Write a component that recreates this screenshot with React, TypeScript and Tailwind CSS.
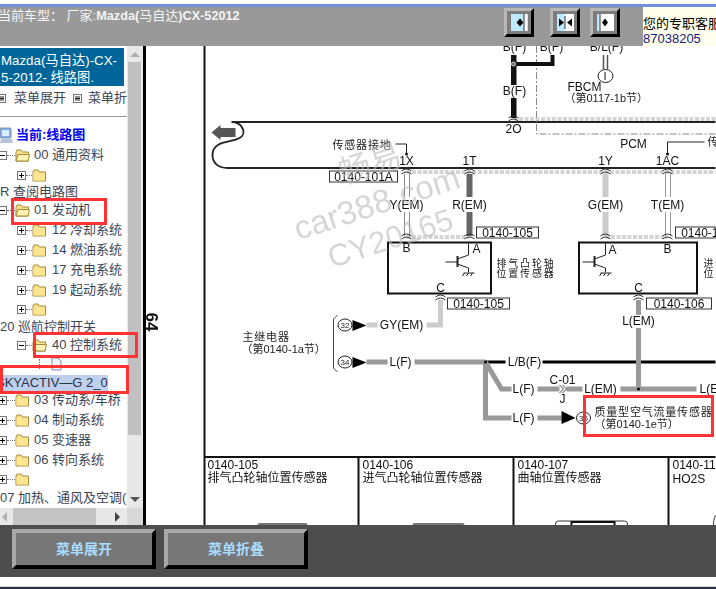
const tree = [
  { h: 'h-[20px]', kind: 'root', label: '当前:线路图' },
  { h: 'h-[20px]', kind: 'folder', level: 0, open: true, label: '00 通用资料' },
  { h: 'h-[20px]', kind: 'folder', level: 1, label: '' },
  { h: 'h-[14px]', kind: 'text', label: 'R 查阅电路图' },
  { h: 'h-[22px]', kind: 'folder', level: 0, open: true, label: '01 发动机' },
  { h: 'h-[18px]', kind: 'folder', level: 1, label: '12 冷却系统' },
  { h: 'h-[22px]', kind: 'folder', level: 1, label: '14 燃油系统' },
  { h: 'h-[18px]', kind: 'folder', level: 1, label: '17 充电系统' },
  { h: 'h-[22px]', kind: 'folder', level: 1, label: '19 起动系统' },
  { h: 'h-[16px]', kind: 'folder', level: 1, label: '' },
  { h: 'h-[20px]', kind: 'text', label: '20 巡航控制开关' },
  { h: 'h-[16px]', kind: 'folder', level: 1, open: true, label: '40 控制系统' },
  { h: 'h-[22px]', kind: 'doc', label: '' },
  { h: 'h-[16px]', kind: 'selected', label: 'SKYACTIV—G 2_0' },
  { h: 'h-[18px]', kind: 'folder', level: 0, label: '03 传动系/车桥' },
  { h: 'h-[22px]', kind: 'folder', level: 0, label: '04 制动系统' },
  { h: 'h-[18px]', kind: 'folder', level: 0, label: '05 变速器' },
  { h: 'h-[22px]', kind: 'folder', level: 0, label: '06 转向系统' },
  { h: 'h-[16px]', kind: 'folder', level: 0, label: '' },
  { h: 'h-[22px]', kind: 'text', label: '07 加热、通风及空调(' },
]

function Folder({ open }: { open?: boolean }) {
  return (
    <svg width="15" height="13" viewBox="0 0 15 13" className="shrink-0">
      <path d="M1 3 L2 1 H6 L7.5 3 H13.5 V12 H1 Z" fill="#fbe38a" stroke="#a58a3c" />
      {open ? (
        <path d="M1 12 L3 5.5 H14.5 L13 12 Z" fill="#fff2b5" stroke="#a58a3c" />
      ) : (
        <path d="M1.5 4 H13 V11.5 H1.5 Z" fill="#fde68f" />
      )}
    </svg>
  )
}

function Expander({ open }: { open?: boolean }) {
  return (
    <span className="relative flex h-[9px] w-[9px] shrink-0 items-center justify-center border border-[#777] bg-white">
      <span className="h-px w-[5px] bg-black" />
      {!open && <span className="absolute h-[5px] w-px bg-black" />}
    </span>
  )
}

function TreeRow({ row }: { row: (typeof tree)[number] }) {
  if (row.kind === 'root') {
    return (
      <div className={`${row.h} flex items-center`}>
        <svg width="15" height="17" viewBox="0 0 15 17" className="-ml-[1px] shrink-0">
          <rect x="1" y="1" width="11" height="10" rx="1" fill="#7fb0ee" stroke="#8090b0" />
          <rect x="3" y="3" width="7" height="6" fill="#d8ecff" />
          <path d="M2 12 H13 L14 16 H1 Z" fill="#b8c4d8" />
        </svg>
        <span className="ml-[2px] text-[13px] font-bold text-[#0000ee] whitespace-nowrap">{row.label}</span>
      </div>
    )
  }
  if (row.kind === 'text') {
    return (
      <div className={`${row.h} flex items-center text-[13px] text-[#3c4656] whitespace-nowrap`}>{row.label}</div>
    )
  }
  if (row.kind === 'selected') {
    return (
      <div className={`${row.h} flex items-center whitespace-nowrap`}>
        <span className="-ml-[4px] bg-[#c0d0ec] text-[13px] leading-[16px] text-[#26344c]">{row.label}</span>
      </div>
    )
  }
  if (row.kind === 'doc') {
    return (
      <div className={`${row.h} flex items-center pl-[39px]`}>
        <span className="mr-[11px] h-[10px] border-l border-dotted border-[#777]" />
        <svg width="11" height="14" viewBox="0 0 11 14">
          <path d="M1 1 H7 L10 4 V13 H1 Z" fill="#f2f4fc" stroke="#8088b8" />
        </svg>
      </div>
    )
  }
  const inner = row.level === 1
  return (
    <div className={`${row.h} flex items-center whitespace-nowrap ${inner ? 'pl-[17px]' : '-ml-[2px]'}`}>
      <Expander open={row.open} />
      <span className={`border-t border-dotted border-[#777] ${inner ? 'w-[6px]' : 'w-[8px]'}`} />
      <Folder open={row.open} />
      <span className={`text-[13px] text-[#3c4656] ${inner ? 'ml-[5px]' : 'ml-[4px]'}`}>{row.label}</span>
    </div>
  )
}

function MenuGlyph() {
  return (
    <svg width="9" height="9" viewBox="0 0 9 9" className="shrink-0">
      <rect x="0.5" y="0.5" width="8" height="8" fill="#fff" stroke="#777" />
      <path d="M2 3 H7 M2 4.5 H7 M2 6 H7" stroke="#222" />
    </svg>
  )
}

function Sidebar() {
  return (
    <aside className="flex w-[146px] shrink-0 flex-col border-r-[3px] border-black bg-[#d8d8d8]">
      <div className="flex min-h-0 flex-1">
        <div className="w-[127px] shrink-0 overflow-hidden bg-white pt-[2px]">
          <div className="h-[38px] w-[124px] bg-[#006699] pl-[1px] pt-[4px] text-[13.3px] leading-[17px] whitespace-nowrap text-white">
            <div>Mazda(马自达)-CX-</div>
            <div>5-2012- 线路图.</div>
          </div>
          <div className="flex h-[24px] items-center text-[13px] whitespace-nowrap text-[#3c4656]">
            <span className="-ml-[3px]"><MenuGlyph /></span>
            <span className="ml-[8px]">菜单展开</span>
            <span className="ml-[7px]"><MenuGlyph /></span>
            <span className="ml-[6px]">菜单折</span>
          </div>
          <div className="mt-[6px] h-px bg-[#999]" />
          <div className="pt-[8px]">
            {tree.map((row, i) => (
              <TreeRow key={i} row={row} />
            ))}
          </div>
        </div>
        <div className="flex w-[16px] shrink-0 flex-col items-center bg-[#e8e8e8] pr-[2px] pl-px">
          <div className="flex h-[16px] items-center justify-center">
            <span className="border-x-[5px] border-b-[5px] border-x-transparent border-b-[#b0b0b0]" />
          </div>
          <div className="h-[373px] w-full bg-[#c0c0c0]" />
          <div className="flex-1" />
          <div className="flex h-[18px] items-center justify-center">
            <span className="border-x-[5px] border-t-[5px] border-x-transparent border-t-[#555]" />
          </div>
        </div>
      </div>
      <div className="flex h-[17px] shrink-0">
        <div className="flex w-[127px] items-center bg-[#e8e8e8]">
          <span className="ml-[2px] border-y-[5px] border-r-[5px] border-y-transparent border-r-[#b0b0b0]" />
          <div className="ml-[6px] h-full w-[83px] bg-[#c4c4c4]" />
          <span className="ml-[19px] border-y-[5px] border-l-[5px] border-y-transparent border-l-[#444]" />
        </div>
      </div>
    </aside>
  )
}

function Label({ x, y, children, big, start, fine }: { x: number; y: number; children: React.ReactNode; big?: boolean; start?: boolean; fine?: boolean }) {
  let cls = 'fill-[#222] text-[11px] tracking-[0.8px]'
  if (big) cls = 'fill-[#111] text-[12px]'
  if (fine) cls = 'fill-[#222] text-[10px] tracking-[1.8px]'
  return (
    <text x={x} y={y} textAnchor={start ? 'start' : 'middle'} dominantBaseline="central" className={cls}>
      {children}
    </text>
  )
}

function Note({ x, y, children }: { x: number; y: number; children: React.ReactNode }) {
  return (
    <text x={x} y={y} dominantBaseline="central" className="fill-[#222] text-[11px]">
      {children}
    </text>
  )
}

function Chev({ x, y }: { x: number; y: number }) {
  return <path d={`M${x - 5} ${y} Q${x} ${y - 4} ${x + 5} ${y} M${x - 5} ${y + 3} Q${x} ${y - 1} ${x + 5} ${y + 3}`} fill="none" stroke="#333" />
}

function Tag({ x, y, w, text }: { x: number; y: number; w: number; text: string }) {
  return (
    <g>
      <rect x={x} y={y} width={w} height={11} fill="#fff" stroke="#333" />
      <Label big x={x + w / 2} y={y + 6}>{text}</Label>
    </g>
  )
}

function Transistor({ x }: { x: number }) {
  // x is the collector wire
  const b = x - 11
  return (
    <g fill="none" stroke="#222">
      <path d={`M${x} 243 V255 L${b} 259`} />
      <path d={`M${b} 256 V267`} strokeWidth="2" />
      <path d={`M${b - 12} 262 H${b}`} />
      <path d={`M${b} 264 L${x} 268 V272`} />
      <path d={`M${x - 5} 273 H${x + 6} M${x - 4} 273 L${x - 6} 276 M${x} 273 L${x - 2} 276 M${x + 4} 273 L${x + 2} 276`} />
    </g>
  )
}

function Diagram() {
  return (
    <svg viewBox="147 46 569 479" className="h-[479px] w-[570px] shrink-0 bg-white blur-[0.35px]">
      {/* frame and table */}
      <path d="M205 46 V525" stroke="#111" strokeWidth="2" />
      <path d="M205 457 H716 M359 457 V525 M514 457 V525 M669 457 V525" stroke="#111" strokeWidth="2" fill="none" />
      <text x="152" y="322" textAnchor="middle" dominantBaseline="central" transform="rotate(90 152 322)" className="fill-[#111] text-[17px] font-bold">64</text>

      {/* PCM outline */}
      <path d="M232 122 H716 M232 122 C243 122 248 134 240 138 C232 143 213 140 213 155 C213 164 220 168 228 168 H716" fill="none" stroke="#222" strokeWidth="1.8" />
      <path d="M212 132.5 L221 125 V128 H236 V137 H221 V140 Z" fill="#555" />
      <path d="M537 46 V134 H716" fill="none" stroke="#888" strokeDasharray="7 2 2 2" />

      {/* shield lines */}
      <g stroke="#aaa" strokeDasharray="4 1.5">
        <path d="M514 118 H716 M514 120 H716" />
        <path d="M407 171 H716 M407 173 H716" />
        <path d="M407 236 H470 M407 238 H470 M606 236 H668 M606 238 H668" />
      </g>

      {/* top wires */}
      <rect x="511.5" y="55" width="5.5" height="30" fill="#111" />
      <rect x="511.5" y="98" width="5.5" height="20" fill="#111" />
      <path d="M514 64 H553 V55" fill="none" stroke="#111" strokeWidth="4" />
      <circle cx="514" cy="64" r="2" fill="#666" stroke="#ddd" />
      <path d="M604 55 V69 M608 55 V69" stroke="#555" strokeWidth="1.5" />
      <ellipse cx="606" cy="76" rx="7.5" ry="6.5" fill="#fff" stroke="#222" />
      <Label x={606} y={76}>I</Label>
      <Label big x={515} y={47}>B(F)</Label>
      <Label big x={552} y={47}>B(F)</Label>
      <Label big x={607} y={47}>B/L(F)</Label>
      <Label big x={515} y={91}>B(F)</Label>
      <Label big x={514} y={129}>2O</Label>
      <Label big x={585} y={87}>FBCM</Label>
      <Note x={565} y={98}>（第0117-1b节）</Note>
      <Chev x={514} y={118} />

      {/* ground callouts */}
      <Label start x={333} y={145}>传感器接地</Label>
      <path d="M396 144 H407 V153" fill="none" stroke="#222" />
      <circle cx="407" cy="154" r="1.5" fill="#111" />
      <path d="M705 142 H668 V153" fill="none" stroke="#222" />
      <circle cx="668" cy="154" r="1.5" fill="#111" />
      <Label big x={634} y={144}>PCM</Label>
      <Label start x={708} y={142}>传</Label>

      <Label big x={407} y={161}>1X</Label>
      <Label big x={470} y={161}>1T</Label>
      <Label big x={606} y={161}>1Y</Label>
      <Label big x={668} y={161}>1AC</Label>
      <Tag x={330} y={171} w={68} text="0140-101A" />

      {/* sensor wires */}
      <path d="M405 174 V197 M410 174 V197 M405 212 V236 M410 212 V236" stroke="#888" />
      <path d="M470 174 V197 M470 212 V236" stroke="#666" strokeWidth="6" />
      <path d="M606 174 V197 M606 212 V236" stroke="#ccc" strokeWidth="6" />
      <path d="M666 174 V197 M671 174 V197 M666 212 V236 M671 212 V236" stroke="#999" />
      <Label big x={407} y={205}>Y(EM)</Label>
      <Label big x={470} y={205}>R(EM)</Label>
      <Label big x={606} y={205}>G(EM)</Label>
      <Label big x={668} y={205}>T(EM)</Label>
      <Chev x={407} y={171} />
      <Chev x={470} y={171} />
      <Chev x={606} y={171} />
      <Chev x={668} y={171} />
      <Chev x={407} y={236} />
      <Chev x={470} y={236} />
      <Chev x={606} y={236} />
      <Chev x={668} y={236} />
      <Tag x={477} y={227} w={62} text="0140-105" />
      <Tag x={676} y={227} w={62} text="0140-106" />

      {/* sensors */}
      <rect x="388.5" y="242.5" width="103" height="51" fill="none" stroke="#111" strokeWidth="2" />
      <rect x="579.5" y="242.5" width="118" height="51" fill="none" stroke="#111" strokeWidth="2" />
      <Transistor x={469} />
      <Transistor x={606} />
      <Label big x={407} y={248}>B</Label>
      <Label big x={477} y={249}>A</Label>
      <Label big x={441} y={288}>C</Label>
      <Label big x={613} y={250}>A</Label>
      <Label big x={668} y={249}>B</Label>
      <Label big x={639} y={288}>C</Label>
      <Label fine start x={497} y={263}>排气凸轮轴</Label>
      <Label fine start x={497} y={273}>位置传感器</Label>
      <Label fine start x={704} y={263}>进气凸轮轴</Label>
      <Label fine start x={704} y={273}>位置传感器</Label>
      <Tag x={448} y={298} w={62} text="0140-105" />
      <Tag x={647} y={298} w={65} text="0140-106" />
      <Chev x={441} y={297} />
      <Chev x={639} y={297} />

      {/* relay feeds */}
      <Label start x={243} y={337}>主继电器</Label>
      <Note x={242} y={349}>（第0140-1a节）</Note>
      <path d="M338 315 L334 319 V368 L338 372" fill="none" stroke="#444" />
      <ellipse cx="345.5" cy="325" rx="7" ry="6" fill="#fff" stroke="#222" />
      <ellipse cx="345.5" cy="362" rx="7" ry="6" fill="#fff" stroke="#222" />
      <text x="345.5" y="325" textAnchor="middle" dominantBaseline="central" className="fill-[#222] text-[8px]">32</text>
      <text x="345.5" y="362" textAnchor="middle" dominantBaseline="central" className="fill-[#222] text-[8px]">34</text>
      <path d="M353 320 L367 325.5 L353 331 Z M353 357 L367 362.5 L353 368 Z" fill="#000" />
      <path d="M367 325 H378 M427 325 H441 V300" fill="none" stroke="#ccc" strokeWidth="5" />
      <Label big x={402} y={325}>GY(EM)</Label>
      <path d="M367 362 H388 M415 362 H486" fill="none" stroke="#999" strokeWidth="5" />
      <Label big x={401} y={362}>L(F)</Label>
      <path d="M486 362 H506 M543 362 H716" fill="none" stroke="#000" strokeWidth="3" />
      <Label big x={525} y={362}>L/B(F)</Label>

      {/* branches */}
      <path d="M486 362 V418 H512 M538 418 H562" fill="none" stroke="#999" strokeWidth="5" />
      <path d="M486 362 L502 389 H512 M538 389 H560 M567 389 H583 M621 389 H697 M639 389 V328 M639 315 V300" fill="none" stroke="#999" strokeWidth="5" />
      <circle cx="486" cy="362" r="1.5" fill="#000" />
      <circle cx="639" cy="389" r="1.5" fill="#000" />
      <Label big x={524} y={389}>L(F)</Label>
      <Label big x={524} y={418}>L(F)</Label>
      <Label big x={601} y={389}>L(EM)</Label>
      <Label big start x={700} y={389}>L(EM)</Label>
      <Label big x={639} y={321}>L(EM)</Label>
      <Label big x={563} y={380}>C-01</Label>
      <Label big x={563} y={399}>J</Label>
      <path d="M560 385 L564 389 L560 393 M563 385 L567 389 L563 393" fill="none" stroke="#444" />
      <path d="M562 411 L576 418 L562 424 Z" fill="#000" />
      <ellipse cx="584" cy="418" rx="7" ry="6" fill="#fff" stroke="#222" />
      <text x="584" y="418" textAnchor="middle" dominantBaseline="central" className="fill-[#222] text-[8px]">35</text>
      <Label start x={595} y={412}>质量型空气流量传感器</Label>
      <Note x={595} y={424}>（第0140-1e节）</Note>

      {/* connector table */}
      <Label big start x={208} y={465}>0140-105</Label>
      <Label big start x={208} y={478}>排气凸轮轴位置传感器</Label>
      <Label big start x={363} y={465}>0140-106</Label>
      <Label big start x={363} y={478}>进气凸轮轴位置传感器</Label>
      <Label big start x={518} y={465}>0140-107</Label>
      <Label big start x={518} y={478}>曲轴位置传感器</Label>
      <Label big start x={673} y={465}>0140-112</Label>
      <Label big start x={673} y={479}>HO2S</Label>
      <rect x="258" y="523" width="50" height="6" rx="2" fill="#777" />
      <rect x="413" y="523" width="52" height="6" rx="2" fill="#777" />
      <rect x="556" y="521" width="72" height="8" rx="3" fill="#fff" stroke="#333" />
      <rect x="572" y="522" width="43" height="6" fill="#fff" stroke="#111" strokeWidth="2" />
      <path d="M714 525 C714 518 716 515 718 514" fill="none" stroke="#333" />

      {/* watermark */}
      <g transform="rotate(-18 380 205)" className="fill-[#bbb] opacity-60">
        <text x="384" y="163" textAnchor="middle" dominantBaseline="central" className="text-[32px]">畅易</text>
        <text x="378" y="202" textAnchor="middle" dominantBaseline="central" className="text-[33px]">car388.com</text>
        <text x="380" y="240" textAnchor="middle" dominantBaseline="central" className="text-[31px]">CY20165</text>
      </g>
    </svg>
  )
}

function ToolIcon({ mode }: { mode: 'left' | 'both' | 'right' }) {
  return (
    <svg width="17" height="17" viewBox="0 0 17 17">
      {mode === 'left' && (
        <>
          <rect width="17" height="17" fill="#bde8ff" />
          <rect x="13" width="3" height="17" fill="#fff" />
          <rect x="12.5" width="1" height="17" fill="#333" />
          <path d="M6 4.5 L2.5 8.5 L6 12.5 Z M6 4.5 L9.5 8.5 L6 12.5 Z" fill="#000" transform="translate(3 0)" />
        </>
      )}
      {mode === 'both' && (
        <>
          <rect width="8" height="17" fill="#bde8ff" />
          <rect x="8" width="9" height="17" fill="#fff" />
          <path d="M2 4.5 L7 8.5 L2 12.5 Z M15 4.5 L10 8.5 L15 12.5 Z" fill="#000" />
          <path d="M8 2 V15" stroke="#333" />
        </>
      )}
      {mode === 'right' && (
        <>
          <rect width="17" height="17" fill="#fff" />
          <rect width="2.5" height="17" fill="#bde8ff" />
          <rect x="2.5" width="1" height="17" fill="#333" />
          <path d="M8 4.5 L5 8.5 L8 12.5 L11 8.5 Z" fill="#000" />
        </>
      )}
    </svg>
  )
}

function ToolButton({ mode, className }: { mode: 'left' | 'both' | 'right'; className?: string }) {
  return (
    <button className={`flex h-[29px] w-[30px] shrink-0 items-center justify-center border-[3px] border-t-[#b8b8b8] border-r-black border-b-black border-l-[#b8b8b8] bg-[#7d7d7d] ${className ?? ''}`}>
      <ToolIcon mode={mode} />
    </button>
  )
}

function BottomButton({ label, className }: { label: string; className?: string }) {
  return (
    <button className={`h-[40px] w-[144px] border-[4px] border-t-[#a8a8a8] border-r-black border-b-black border-l-[#a8a8a8] bg-[#777] text-[14px] font-bold text-[#a8dcff] ${className ?? ''}`}>
      {label}
    </button>
  )
}

export default function App() {
  return (
    <div className="relative flex h-[589px] w-[716px] flex-col overflow-hidden bg-white font-['Liberation_Sans','Noto_Sans_CJK_SC',sans-serif]">
      <div className="h-[4px] shrink-0 bg-white" />
      <div className="h-[3px] shrink-0 bg-[#6f8fdc]" />

      {/* header */}
      <div className="flex h-[39px] shrink-0 bg-[#999]">
        <div className="w-[504px] shrink-0 -indent-[2px] pt-[1px] text-[13px] leading-[15px] whitespace-nowrap text-[#f4f4f4]">
          当前车型： 厂家:<span className="text-[12.7px] font-bold">Mazda(</span>马自达<span className="text-[12.7px] font-bold">)CX-52012</span>
        </div>
        <ToolButton mode="left" className="mt-px" />
        <ToolButton mode="both" className="mt-px ml-[16px]" />
        <ToolButton mode="right" className="mt-px ml-[10px]" />
        <div className="ml-[23px] flex-1 overflow-hidden bg-[#ffffee] pt-[9px] text-[13px] leading-[15px] whitespace-nowrap">
          <div className="text-black">您的专职客服</div>
          <div className="text-[#1a1a80]">87038205</div>
        </div>
      </div>

      <div className="flex h-[479px] shrink-0">
        <Sidebar />
        <Diagram />
      </div>

      {/* bottom bar */}
      <div className="flex h-[52px] shrink-0 items-start gap-[8px] bg-[#4d4d4d] pt-[4px] pl-[12px]">
        <BottomButton label="菜单展开" />
        <BottomButton label="菜单折叠" />
      </div>
      <div className="h-[9px] shrink-0 bg-white" />
      <div className="h-px shrink-0 bg-[#d0d8e4]" />
      <div className="h-[2px] shrink-0 bg-[#2a3040]" />

      {/* red annotation boxes */}
      <div className="absolute top-[198px] left-[11px] h-[27px] w-[96px] border-[3px] border-[#ff3333]" />
      <div className="absolute top-[332px] left-[33px] h-[26px] w-[105px] border-[3px] border-[#ff3333]" />
      <div className="absolute top-[365px] left-0 h-[29px] w-[129px] border-[3px] border-[#ff3333]" />
      <div className="absolute top-[395px] left-[583px] h-[42px] w-[131px] border-[3px] border-[#ff3333]" />
    </div>
  )
}
